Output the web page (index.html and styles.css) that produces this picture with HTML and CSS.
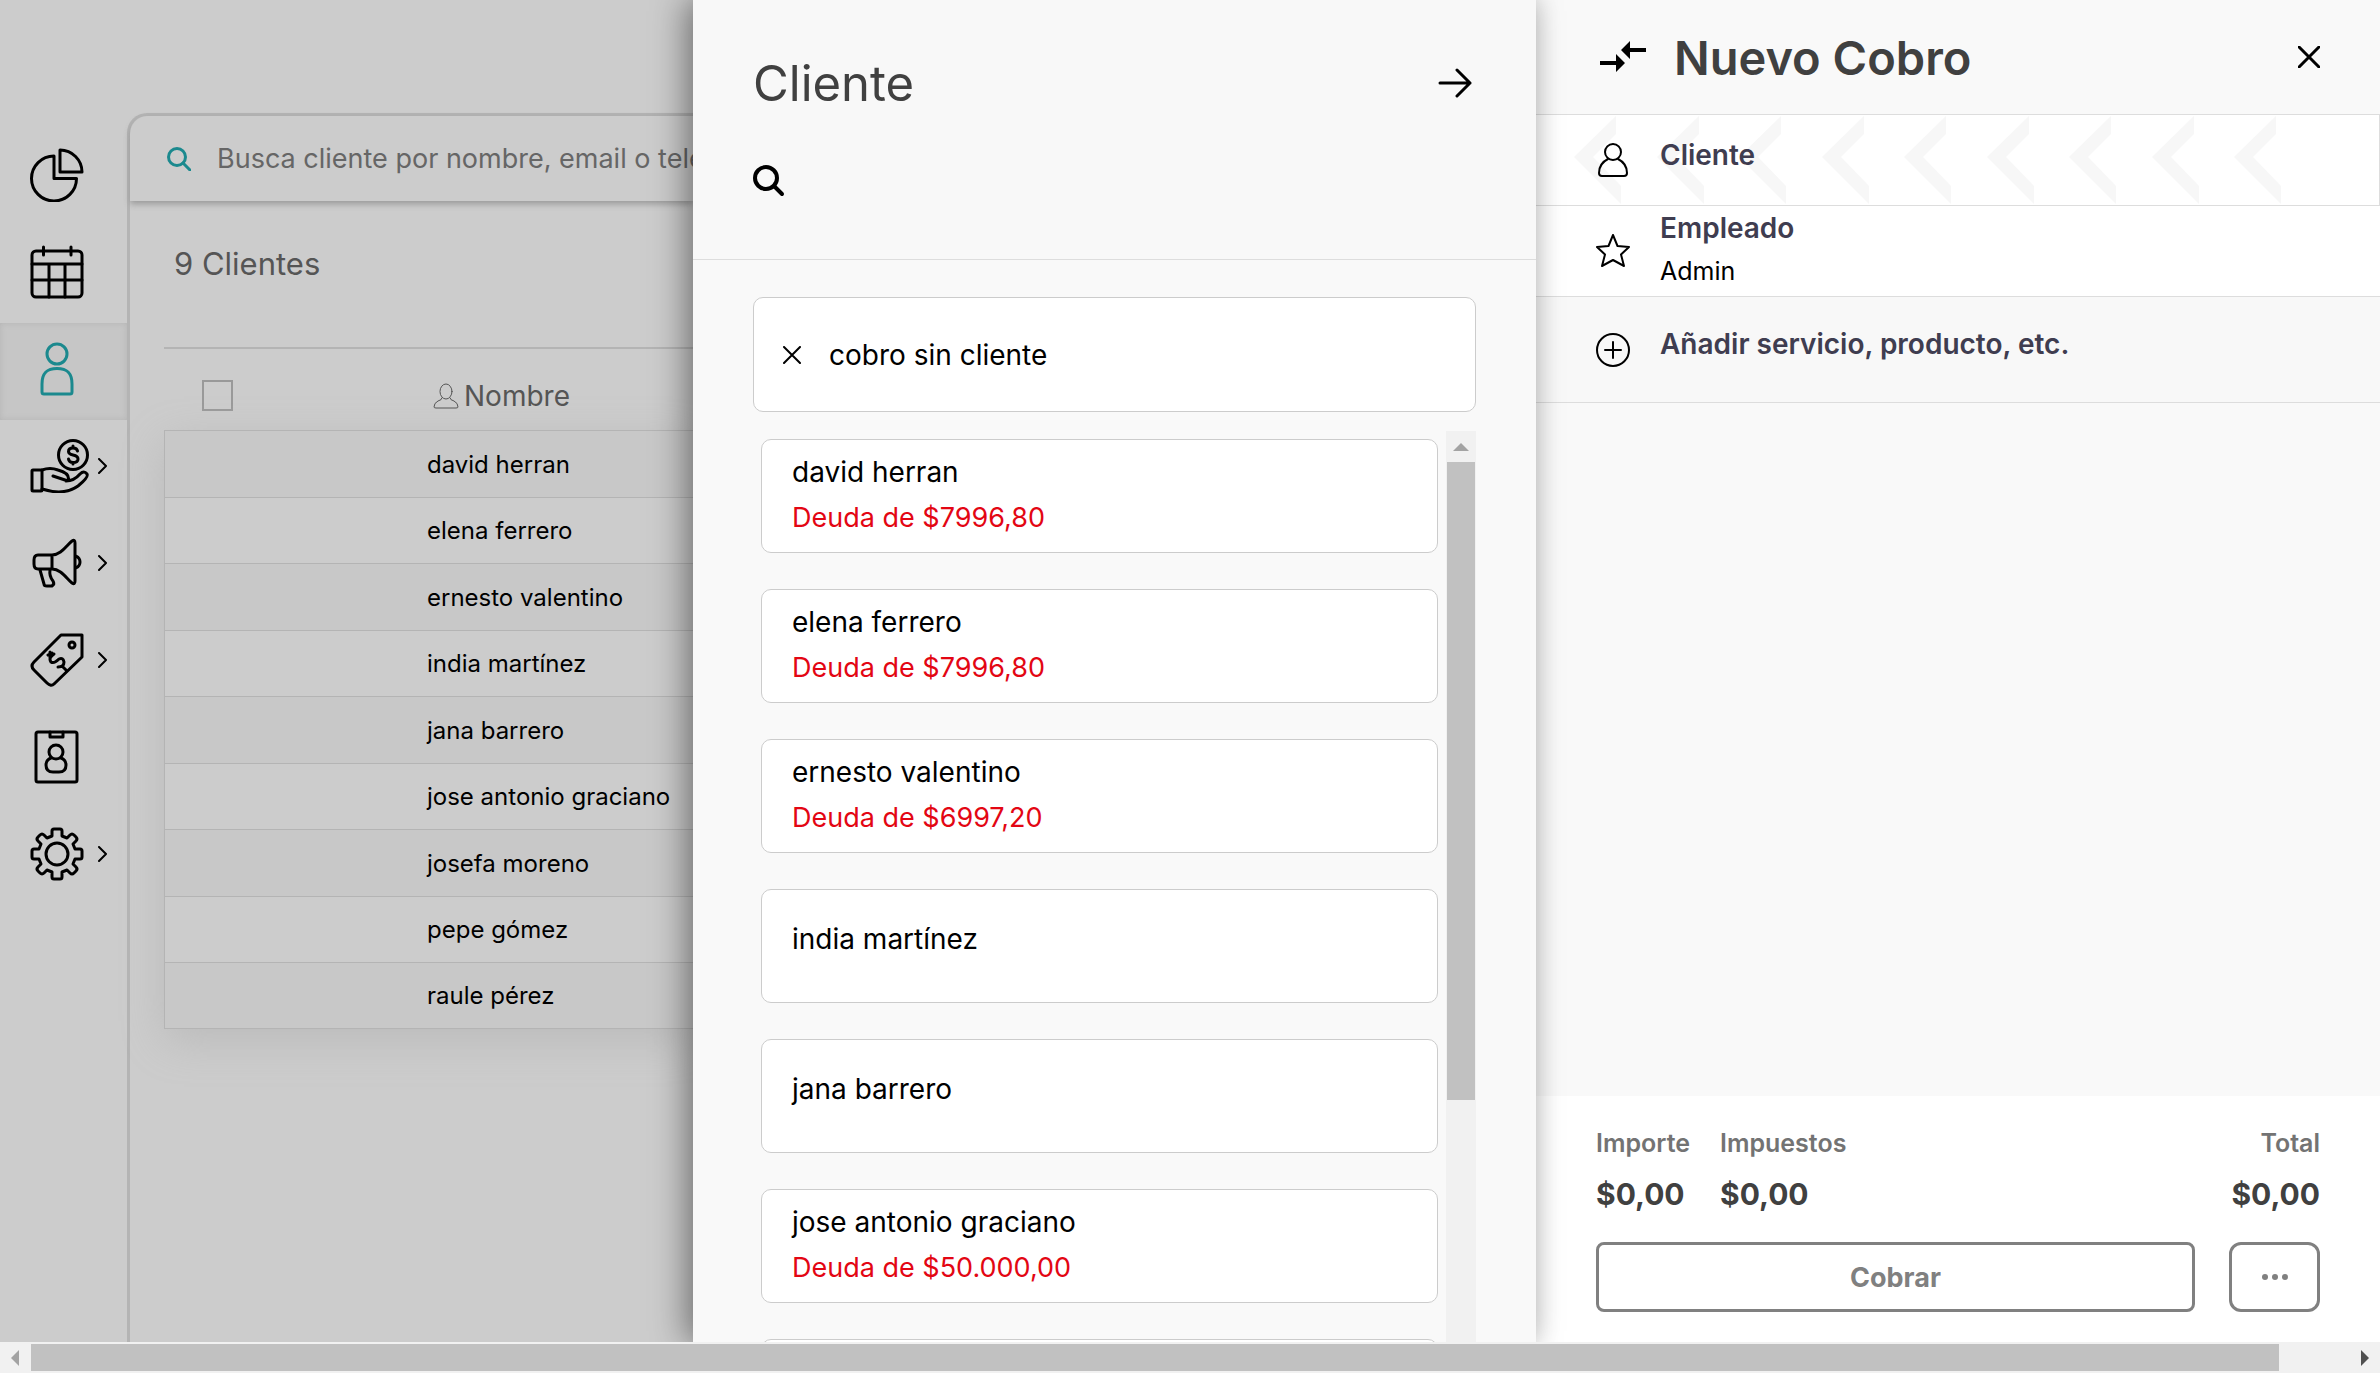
FILE: index.html
```html
<!DOCTYPE html>
<html lang="es">
<head>
<meta charset="utf-8">
<title>Nuevo Cobro</title>
<link rel="stylesheet" href="styles.css">
</head>
<body>
<div class="app">
  <div class="workspace">
    <nav class="sidebar" aria-label="Principal">
      <a class="nav-item" href="#" aria-label="Informes"><svg class="nav-icon" viewBox="0 0 54 54"><path d="M24 8A22.500 22.500 0 1 0 46.500 30.500H24Z"/><path d="M30 2V24H52A22 22 0 0 0 30 2Z"/></svg></a>
      <a class="nav-item" href="#" aria-label="Agenda"><svg class="nav-icon" viewBox="0 0 54 54"><rect x="2" y="6" width="50" height="46" rx="4"/><path d="M2 19H52M2 35H52M19 19V52M35 19V52M13.500 2V10M41 2V10"/></svg></a>
      <a class="nav-item active" href="#" aria-label="Clientes"><svg class="nav-icon" viewBox="0 0 54 54"><circle cx="27" cy="12" r="10"/><path d="M12 42C12 30 18 26.500 27 26.500S42 30 42 42V50Q42 52 40 52H14Q12 52 12 50Z"/></svg></a>
      <a class="nav-item" href="#" aria-label="Ventas"><svg class="nav-icon wide" viewBox="0 0 60 54"><circle cx="43" cy="16" r="14.500"/><path d="M47.500 12Q47 9 43 9Q38.500 9 38.500 12.500Q38.500 15 43 16Q48 17 48 20Q48 23.500 43 23.500Q39 23.500 38.500 20M43 7V9M43 23.500V25"/><rect x="2" y="31" width="10" height="21" rx="1"/><path d="M12 31Q20 28 28 31Q39 34 38.500 40Q38 42 35 41L23 37M36 42Q44 42 50 35Q54 31 57 35Q59 38 48 47Q34 57 12 50"/></svg><svg class="chevron" viewBox="0 0 10 16"><path d="M1 1L8 8L1 15"/></svg></a>
      <a class="nav-item" href="#" aria-label="Marketing"><svg class="nav-icon" viewBox="0 0 54 54"><path d="M22 19H8Q4 19 4 24V28Q4 33 8 33H22ZM22 19C31 19 36 10 42 5Q45 3 45 7V45Q45 49 42 47C36 42 31 33 22 33M46 20Q50 22 50 26T46 32M10 34L14 48Q14 50 17 50H22Q25 48 23 45Q19 40 20 34"/></svg><svg class="chevron" viewBox="0 0 10 16"><path d="M1 1L8 8L1 15"/></svg></a>
      <a class="nav-item" href="#" aria-label="Tarifas"><svg class="nav-icon" viewBox="0 0 54 54"><path d="M31 2H52V24L24 51Q21 54 17 50L4 37Q0 33 4 29ZM20 19V25M18 22L22 20M24 21Q18 25 21 29Q24 31 29 26Q33 24 34 29Q34 34 28 34M33 34L36 37"/><circle cx="42" cy="12" r="3"/></svg><svg class="chevron" viewBox="0 0 10 16"><path d="M1 1L8 8L1 15"/></svg></a>
      <a class="nav-item" href="#" aria-label="Empleados"><svg class="nav-icon" viewBox="0 0 54 54"><rect x="6" y="2" width="41" height="50" rx="2"/><path d="M20 2V7H33V2"/><circle cx="26" cy="22" r="7"/><path d="M21 28Q16 30 16 35Q16 42 23 42H29Q36 42 36 35Q36 30 31 28"/></svg></a>
      <a class="nav-item" href="#" aria-label="Ajustes"><svg class="nav-icon" viewBox="0 0 54 54"><circle cx="27" cy="27" r="11"/><path d="M22 4Q22 2 24 2H30Q32 2 32 4V9L37 11L40 8Q42 6 44 8L46 10Q48 12 46 14L43 17L45 22H50Q52 22 52 24V30Q52 32 50 32H45L43 37L46 40Q48 42 46 44L44 46Q42 48 40 46L37 43L32 45V50Q32 52 30 52H24Q22 52 22 50V45L17 43L14 46Q12 48 10 46L8 44Q6 42 8 40L11 37L9 32H4Q2 32 2 30V24Q2 22 4 22H9L11 17L8 14Q6 12 8 10L10 8Q12 6 14 8L17 11L22 9Z"/></svg><svg class="chevron" viewBox="0 0 10 16"><path d="M1 1L8 8L1 15"/></svg></a>
    </nav>
    <main class="clients">
      <label class="search">
        <svg class="search-icon" viewBox="0 0 24 24"><circle cx="10" cy="10" r="8.500"/><path d="M16 16L23 23"/></svg>
        <input type="text" placeholder="Busca cliente por nombre, email o teléfono" aria-label="Busca cliente">
      </label>
      <h1 class="count">9 Clientes</h1>
      <table class="table">
        <thead><tr><th class="pick"><input type="checkbox" aria-label="Seleccionar todos"></th><th><span class="th-label"><svg class="th-icon" viewBox="0 0 26 26"><ellipse cx="13" cy="8.500" rx="6" ry="7.500"/><path d="M9 15Q9 17 5 18Q1 20 1 24Q1 25 3 25H23Q25 25 25 24Q25 20 21 18Q17 17 17 15"/></svg>Nombre</span></th></tr></thead>
        <tbody>
          <tr><td></td><td>david herran</td></tr>
          <tr><td></td><td>elena ferrero</td></tr>
          <tr><td></td><td>ernesto valentino</td></tr>
          <tr><td></td><td>india martínez</td></tr>
          <tr><td></td><td>jana barrero</td></tr>
          <tr><td></td><td>jose antonio graciano</td></tr>
          <tr><td></td><td>josefa moreno</td></tr>
          <tr><td></td><td>pepe gómez</td></tr>
          <tr><td></td><td>raule pérez</td></tr>
        </tbody>
      </table>
    </main>
  </div>

  <section class="drawer">
    <header class="drawer-head">
      <div class="drawer-title"><h2>Cliente</h2>
        <button class="icon-btn" type="button" aria-label="Siguiente"><svg class="arrow" viewBox="0 0 34 30"><path d="M2 15H32M19 2L32 15L19 28"/></svg></button></div>
      <button class="icon-btn" type="button" aria-label="Buscar"><svg class="lens" viewBox="0 0 32 32"><circle cx="13" cy="13" r="11"/><path d="M21 21L29 29"/></svg></button>
    </header>
    <div class="drawer-body">
      <button class="no-client" type="button"><svg class="cross small" viewBox="0 0 18 18"><path d="M1 1L17 17M17 1L1 17"/></svg>cobro sin cliente</button>
      <div class="list-wrap">
        <div class="list">
          <button class="card owing" type="button"><span>david herran</span><span class="debt">Deuda de $7996,80</span></button>
          <button class="card owing" type="button"><span>elena ferrero</span><span class="debt">Deuda de $7996,80</span></button>
          <button class="card owing" type="button"><span>ernesto valentino</span><span class="debt">Deuda de $6997,20</span></button>
          <button class="card" type="button"><span>india martínez</span></button>
          <button class="card" type="button"><span>jana barrero</span></button>
          <button class="card owing" type="button"><span>jose antonio graciano</span><span class="debt">Deuda de $50.000,00</span></button>
          <button class="card" type="button" aria-label="josefa moreno"></button>
        </div>
        <div class="vbar"><svg class="up" viewBox="0 0 16 8"><path d="M8 0L16 8H0Z"/></svg><div class="vthumb"></div></div>
      </div>
    </div>
  </section>

  <aside class="charge">
    <header class="charge-head">
      <svg class="transfer" viewBox="0 0 46 32"><path d="M0 20H16V13L25 22L16 31V24H0ZM46 7H30V0L21 9L30 18V11H46Z"/></svg>
      <h2>Nuevo Cobro</h2>
      <button class="icon-btn" type="button" aria-label="Cerrar"><svg class="cross" viewBox="0 0 22 22"><path d="M1 1L21 21M21 1L1 21"/></svg></button>
    </header>
    <button class="row client-row" type="button">
      <svg class="row-icon" viewBox="0 0 34 34"><circle cx="17" cy="9" r="8"/><path d="M12 16C6 19 3 24 3 30Q3 33 6 33H28Q31 33 31 30C31 24 28 19 22 16"/></svg>
      <span class="row-text"><b>Cliente</b></span>
      <svg class="stripes" viewBox="0 0 713 88"><defs><path id="chev" d="M42 0V18L19 41L47 70V88L0 41Z"/></defs><use href="#chev"/><use href="#chev" x="83"/><use href="#chev" x="165"/><use href="#chev" x="248"/><use href="#chev" x="330"/><use href="#chev" x="413"/><use href="#chev" x="495"/><use href="#chev" x="578"/><use href="#chev" x="660"/></svg>
    </button>
    <button class="row staff-row" type="button">
      <svg class="row-icon" viewBox="0 0 34 34"><path d="M17 1L21.500 12L33 13L25 20.500L28 32L17 26L6 32L9 20.500L1 13L12.500 12Z"/></svg>
      <span class="row-text"><b>Empleado</b><span>Admin</span></span>
    </button>
    <button class="row add-row" type="button">
      <svg class="row-icon" viewBox="0 0 34 34"><circle cx="17" cy="17" r="16"/><path d="M17 9V25M9 17H25"/></svg>
      <span class="row-text"><b>Añadir servicio, producto, etc.</b></span>
    </button>
    <footer class="totals">
      <dl class="sums">
        <div><dt>Importe</dt><dd>$0,00</dd></div>
        <div><dt>Impuestos</dt><dd>$0,00</dd></div>
        <div class="total"><dt>Total</dt><dd>$0,00</dd></div>
      </dl>
      <div class="actions">
        <button class="pay" type="button">Cobrar</button>
        <button class="more" type="button" aria-label="Más opciones"><svg class="dots" viewBox="0 0 26 6"><circle cx="3" cy="3" r="3"/><circle cx="13" cy="3" r="3"/><circle cx="23" cy="3" r="3"/></svg></button>
      </div>
    </footer>
  </aside>
</div>
<div class="hbar"><svg class="side" viewBox="0 0 8 16"><path class="dim" d="M8 0V16L0 8Z"/></svg><div class="htrack"><div class="hthumb"></div></div><svg class="side" viewBox="0 0 8 16"><path d="M0 0V16L8 8Z"/></svg></div>
</body>
</html>
```
FILE: styles.css
```css
* { box-sizing: border-box; }
body {
  margin: 0;
  height: 100vh;
  display: flex;
  flex-direction: column;
  overflow: hidden;
  font-family: Inter, "Liberation Sans", sans-serif;
  font-size: 28px;
  color: #000;
  background: #ccc;
}
h1, h2, dl, dd { margin: 0; }
button { font: inherit; color: inherit; padding: 0; border: 0; background: none; cursor: pointer; text-align: left; }
svg { display: block; flex: none; fill: none; stroke: currentColor; stroke-width: 3; stroke-linecap: round; stroke-linejoin: round; }
.app { flex: 1; min-height: 0; display: grid; grid-template-columns: 693fr 843fr 844fr; }

.workspace { min-width: 0; min-height: 0; display: flex; padding-top: 113px; overflow: hidden; }
.sidebar { width: 127px; flex: none; padding-top: 16px; }
.nav-item { position: relative; height: 97px; display: flex; align-items: center; padding: 0 0 6px 30px; color: #000; }
.nav-item.active { color: #1b898e; background: #c6c6c6; box-shadow: inset 0 0 6px #b4b4b4; }
.nav-icon { width: 54px; height: 54px; }
.nav-icon.wide { width: 60px; }
.chevron { position: absolute; left: 98px; width: 10px; height: 16px; stroke-width: 2; }
.clients { flex: 1; min-width: 0; border: 3px solid #b4b4b4; border-width: 3px 0 0 3px; border-top-left-radius: 20px; }
.search { display: flex; align-items: center; gap: 26px; height: 85px; padding-left: 37px; box-shadow: 0 3px 6px #999; border-top-left-radius: 18px; }
.search-icon { width: 24px; height: 24px; color: #1b898e; }
.search input { flex: 1; min-width: 0; padding: 0; border: 0; background: none; font: inherit; font-size: 27px; outline: 0; }
.search input::placeholder { color: #666; opacity: 1; }
.count { margin: 43px 0 0 44px; font-size: 31px; line-height: 40px; font-weight: 400; color: #555; }
.table { width: calc(100% - 34px); margin: 63px 0 0 34px; border-collapse: separate; border-spacing: 0; font-size: 24px; }
.table th { height: 83px; padding: 12px 0 0; border-top: 2px solid #b4b4b4; font-size: 28px; font-weight: 400; text-align: left; color: #555; }
.table th.pick { width: 263px; padding-left: 38px; }
.table input { appearance: none; display: block; width: 31px; height: 31px; margin: 0; border: 2px solid #999; }
.th-label { display: flex; align-items: center; gap: 5px; padding-left: 6px; }
.th-icon { width: 26px; height: 26px; stroke-width: 1; }
.table tbody { box-shadow: 0 12px 40px #bbb; }
.table td { height: 66px; padding: 0; border-top: 1px solid #b4b4b4; background: #ccc; white-space: nowrap; }
.table td:first-child { border-left: 1px solid #b4b4b4; }
.table tr:nth-child(odd) td { height: 67px; background: #c8c8c8; }
.table tr:last-child td { border-bottom: 1px solid #b4b4b4; }

.drawer { position: relative; z-index: 1; min-width: 0; min-height: 0; display: flex; flex-direction: column; background: #f9f9f9; box-shadow: -8px 0 32px #0006, 4px 0 20px #00000014; }
.drawer-head { height: 260px; padding: 56px 60px 0; background: #f8f8f8; border-bottom: 1px solid #ddd; }
.drawer-title { display: flex; align-items: center; justify-content: space-between; height: 54px; margin-bottom: 55px; padding-right: 4px; }
.drawer-title h2 { font-size: 49px; font-weight: 400; color: #404040; }
.arrow { width: 34px; height: 30px; }
.lens { width: 32px; height: 32px; stroke-width: 4; }
.drawer-body { flex: 1; min-height: 0; display: flex; flex-direction: column; gap: 19px; padding: 37px 60px 0; background: #f9f9f9; }
.no-client { flex: none; display: flex; align-items: center; gap: 28px; height: 115px; padding-left: 29px; background: #fff; border: 1px solid #ccc; border-radius: 10px; }
.cross { width: 22px; height: 22px; }
.cross.small { width: 18px; height: 18px; stroke-width: 2; }
.list-wrap { flex: 1; min-height: 0; display: flex; gap: 8px; }
.list { flex: 1; display: flex; flex-direction: column; gap: 36px; padding: 8px 0 0 8px; overflow: hidden; }
.card { flex: none; display: flex; flex-direction: column; justify-content: center; height: 114px; padding: 0 30px 14px; line-height: 46px; background: #fff; border: 1px solid #ccc; border-radius: 10px; }
.card.owing { padding-bottom: 2px; }
.debt { font-size: 27px; color: #e30613; }
.vbar { width: 30px; background: #f1f1f1; padding: 0 1px; }
.up { width: 16px; height: 8px; margin: 12px auto 11px; fill: #a3a3a3; stroke: none; }
.vthumb { height: 70%; background: #c1c1c1; }

.charge { min-width: 0; min-height: 0; display: flex; flex-direction: column; background: #f9f9f9; }
.charge-head { display: flex; align-items: center; height: 115px; padding: 0 60px 0 64px; border-bottom: 1px solid #ddd; }
.charge-head h2 { flex: 1; margin-left: 28px; font-size: 47px; font-weight: 600; color: #404040; }
.transfer { width: 46px; height: 32px; fill: #000; stroke: none; }
.row { position: relative; display: flex; align-items: center; height: 91px; padding-left: 60px; gap: 30px; background: #fff; border-bottom: 1px solid #ddd; }
.client-row { border-right: 1px solid #ddd; }
.row-icon { position: relative; z-index: 1; width: 34px; height: 34px; stroke-width: 2; }
.row-text { position: relative; z-index: 1; display: flex; flex-direction: column; font-size: 25px; line-height: 43px; }
.row-text b { font-size: 28px; font-weight: 600; color: #3f3d50; }
.client-row .row-text, .add-row .row-text { padding-bottom: 10px; }
.staff-row .row-text { padding-bottom: 2px; }
.add-row { height: 106px; background: #f8f8f8; }
.stripes { position: absolute; left: 38px; top: 1px; width: 713px; height: 88px; fill: #f7f7f7; stroke: none; }
.totals { margin-top: auto; padding: 29px 60px 30px; background: #fff; }
.sums { display: flex; gap: 30px; margin-bottom: 18px; }
.sums dt { font-size: 25px; line-height: 36px; font-weight: 600; color: #737373; }
.sums dd { padding-top: 3px; font-size: 30px; line-height: 60px; font-weight: 700; color: #404040; }
.total { margin-left: auto; text-align: right; }
.actions { display: flex; gap: 34px; }
.pay, .more { height: 70px; border: 3px solid #808080; border-radius: 8px; background: #fff; color: #808080; text-align: center; font-size: 27px; font-weight: 700; }
.pay { flex: 1; }
.more { width: 91px; border-radius: 12px; }
.dots { width: 26px; height: 6px; margin: 0 auto; fill: #808080; stroke: none; }

.hbar { position: relative; z-index: 2; flex: none; display: flex; align-items: center; gap: 12px; height: 31px; padding: 0 11px; background: #f1f1f1; }
.side { width: 8px; height: 16px; fill: #505050; stroke: none; }
.side .dim { fill: #a3a3a3; }
.htrack { flex: 1; }
.hthumb { width: 97%; height: 27px; background: #c1c1c1; }
```
